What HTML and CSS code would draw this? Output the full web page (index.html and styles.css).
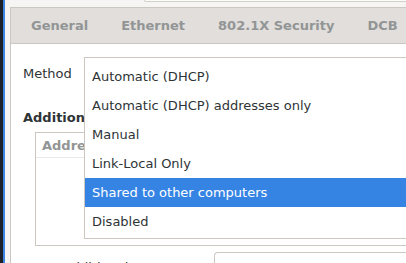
FILE: index.html
```html
<!DOCTYPE html>
<html>
<head>
<meta charset="utf-8">
<link rel="stylesheet" href="styles.css">
</head>
<body>
<div class="screen">
  <div class="stripe-dark"></div>
  <div class="stripe-blue"></div>
  <div class="window">
    <div class="top-row"><div class="top-entry"></div></div>
    <div class="notebook">
      <div class="tabs">
        <span class="tab">General</span>
        <span class="tab">Ethernet</span>
        <span class="tab">802.1X Security</span>
        <span class="tab">DCB</span>
      </div>
      <div class="page">
        <div class="method-row"><span class="label">Method</span></div>
        <div class="section-title">Additional static addresses</div>
        <div class="addr-box">
          <div class="addr-head">
            <span class="col">Address</span>
            <span class="col">Netmask</span>
            <span class="col">Gateway</span>
          </div>
        </div>
        <div class="dns-row">
          <span class="label dns-label">Additional DNS servers</span>
          <div class="entry"></div>
        </div>
      </div>
    </div>
  </div>
  <div class="popup">
    <div class="item">Automatic (DHCP)</div>
    <div class="item">Automatic (DHCP) addresses only</div>
    <div class="item">Manual</div>
    <div class="item">Link-Local Only</div>
    <div class="item selected">Shared to other computers</div>
    <div class="item">Disabled</div>
  </div>
</div>
</body>
</html>
```

FILE: styles.css
```css
html, body {
  margin: 0;
  padding: 0;
}
body {
  width: 406px;
  height: 263px;
  overflow: hidden;
  font-family: "DejaVu Sans", sans-serif;
  font-size: 13px;
  color: #2e3436;
}
.screen {
  position: relative;
  display: flex;
  width: 406px;
  height: 263px;
  overflow: hidden;
}
.stripe-dark {
  width: 3px;
  flex: none;
  background: #1d2028;
}
.stripe-blue {
  width: 2px;
  flex: none;
  background: #3b84e0;
}
.window {
  flex: 1;
  background: #f6f5f4;
  padding-left: 5px;
  display: flex;
  flex-direction: column;
  min-width: 0;
}
.top-row {
  height: 7px;
  flex: none;
}
.top-entry {
  margin-left: 134px;
  height: 1px;
  background: #fbfbfa;
  border-bottom: 1px solid #d3cfcb;
  border-left: 1px solid #d3cfcb;
  border-bottom-left-radius: 3px;
}
.notebook {
  flex: 1;
  border-left: 1px solid #cdc7c2;
  border-top: 1px solid #cdc7c2;
  background: #ffffff;
  display: flex;
  flex-direction: column;
}
.tabs {
  height: 35px;
  flex: none;
  background: #e1dedb;
  border-bottom: 1px solid #cdc7c2;
  display: flex;
  align-items: center;
  gap: 33px;
  padding-left: 20px;
  white-space: nowrap;
}
.tab {
  font-weight: bold;
  color: #929595;
}
.page {
  flex: 1;
  padding-left: 12px;
  display: flex;
  flex-direction: column;
}
.method-row {
  margin-top: 14px;
  height: 30px;
  display: flex;
  align-items: center;
}
.section-title {
  margin-top: 21px;
  height: 17px;
  line-height: 17px;
  font-weight: bold;
  white-space: nowrap;
}
.addr-box {
  margin-top: 6px;
  margin-left: 12px;
  height: 112px;
  border: 1px solid #cdc7c2;
  border-right: none;
  flex: none;
}
.addr-head {
  height: 24px;
  border-bottom: 1px solid #ebeae8;
  display: flex;
  align-items: center;
  gap: 60px;
  padding-left: 6px;
  white-space: nowrap;
}
.col {
  font-weight: bold;
  color: #929595;
}
.dns-row {
  margin-top: 6px;
  display: flex;
  align-items: flex-start;
  white-space: nowrap;
}
.dns-label {
  padding-left: 40px;
  margin-top: 8px;
  width: 151px;
  flex: none;
}
.entry {
  flex: 1;
  height: 30px;
  border: 1px solid #cdc7c2;
  border-right: none;
  border-top-left-radius: 4px;
  background: #ffffff;
}
.popup {
  position: absolute;
  left: 84px;
  top: 57px;
  width: 400px;
  padding: 4px 0 2px;
  background: #ffffff;
  border: 1px solid #cdc7c2;
}
.item {
  height: 29px;
  line-height: 29px;
  padding-left: 7px;
  white-space: nowrap;
  color: #2e3436;
}
.item.selected {
  background: #3584e4;
  color: #ffffff;
}
```
